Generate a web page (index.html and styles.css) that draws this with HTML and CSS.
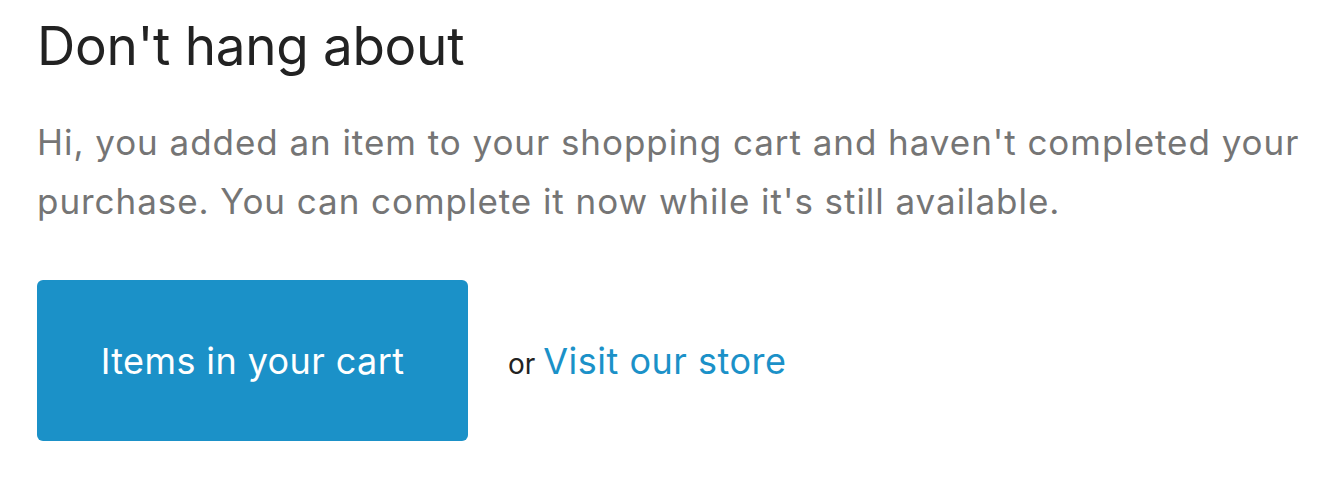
FILE: index.html
```html
<!DOCTYPE html>
<html lang="en">
<head>
    <meta charset="UTF-8">
    <meta name="viewport" content="width=device-width, initial-scale=1.0">
    <title>Don't hang about</title>
    <link rel="stylesheet" href="styles.css">
</head>
<body>
    <div class="mail">
        <h1>Don't hang about</h1>
        <p class="intro">Hi, you added an item to your shopping cart and haven't completed your purchase. You can complete it now while it's still available.</p>
        <div class="actions">
            <a class="cart-button" href="#">Items in your cart</a>
            <span class="or">or <a class="store-link" href="#">Visit our store</a></span>
        </div>
    </div>
</body>
</html>
```

FILE: styles.css
```css
body {
    margin: 0;
    font-family: Inter, 'Noto Sans', sans-serif;
    background: white;
    color: #222;
}
.mail {
    padding: 14px 0 0 37px;
    max-width: 1290px;
}
h1 {
    margin: 0;
    font-size: 53px;
    font-weight: 400;
    line-height: 64px;
    letter-spacing: -0.3px;
    color: #222;
}
.intro {
    margin: 35px 0 0;
    font-size: 35px;
    line-height: 59px;
    letter-spacing: 0.95px;
    color: #757575;
}
.actions {
    display: flex;
    align-items: center;
    gap: 40px;
    margin-top: 49px;
}
.cart-button {
    display: flex;
    align-items: center;
    justify-content: center;
    width: 431px;
    height: 161px;
    background: #1b91c8;
    color: white;
    border-radius: 6px;
    font-size: 36px;
    letter-spacing: 0.4px;
    text-decoration: none;
}
.or {
    font-size: 28px;
    color: #222;
}
.store-link {
    font-size: 36px;
    letter-spacing: 0.5px;
    color: #1b91c8;
    text-decoration: none;
}
```
